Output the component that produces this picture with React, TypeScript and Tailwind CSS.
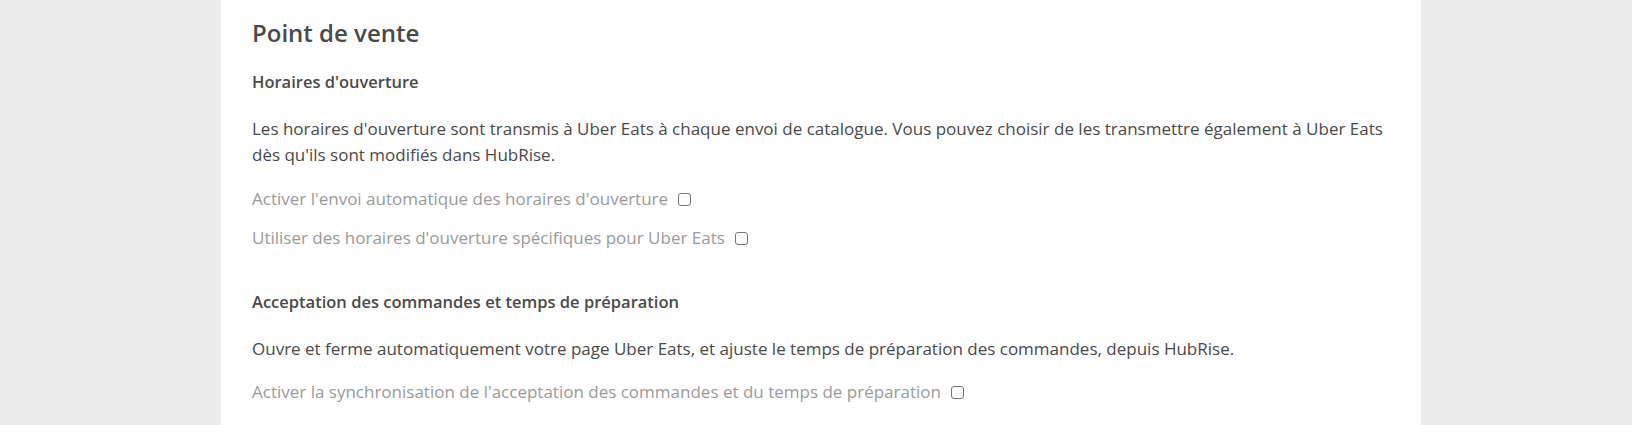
import React from 'react';

function Toggle({ label }: { label: string }) {
  return (
    <label className="flex items-center gap-[10px] text-[17px] leading-[26px] text-[#9b9b9b]">
      <span>{label}</span>
      <input
        type="checkbox"
        className="h-[13px] w-[13px] appearance-none rounded-[3px] border border-[#767676] bg-white"
      />
    </label>
  );
}

export default function App() {
  return (
    <div
      className="flex min-h-[425px] w-full bg-[#ececec] pl-[221px] pr-[211px]"
      style={{ fontFamily: '"Open Sans", "Liberation Sans", sans-serif' }}
    >
      <div className="flex-1 bg-white px-[31px] pt-[17px] text-[#4a4a4a]">
        <h1 className="text-[24px] leading-[32px] font-semibold text-[#4a4a4a]">Point de vente</h1>

        <h2 className="mt-[21px] text-[16.5px] leading-[24px] font-semibold">Horaires d'ouverture</h2>
        <p className="mt-[22px] text-[17px] leading-[26px]">
          Les horaires d'ouverture sont transmis à Uber Eats à chaque envoi de catalogue. Vous pouvez choisir de les
          transmettre également à Uber Eats dès qu'ils sont modifiés dans HubRise.
        </p>
        <div className="mt-[18px] flex flex-col gap-[13px]">
          <Toggle label="Activer l'envoi automatique des horaires d'ouverture" />
          <Toggle label="Utiliser des horaires d'ouverture spécifiques pour Uber Eats" />
        </div>

        <h2 className="mt-[39px] text-[16.5px] leading-[24px] font-semibold">
          Acceptation des commandes et temps de préparation
        </h2>
        <p className="mt-[22px] text-[17px] leading-[26px]">
          Ouvre et ferme automatiquement votre page Uber Eats, et ajuste le temps de préparation des commandes, depuis
          HubRise.
        </p>
        <div className="mt-[17px] flex flex-col gap-[13px]">
          <Toggle label="Activer la synchronisation de l'acceptation des commandes et du temps de préparation" />
        </div>
      </div>
    </div>
  );
}
